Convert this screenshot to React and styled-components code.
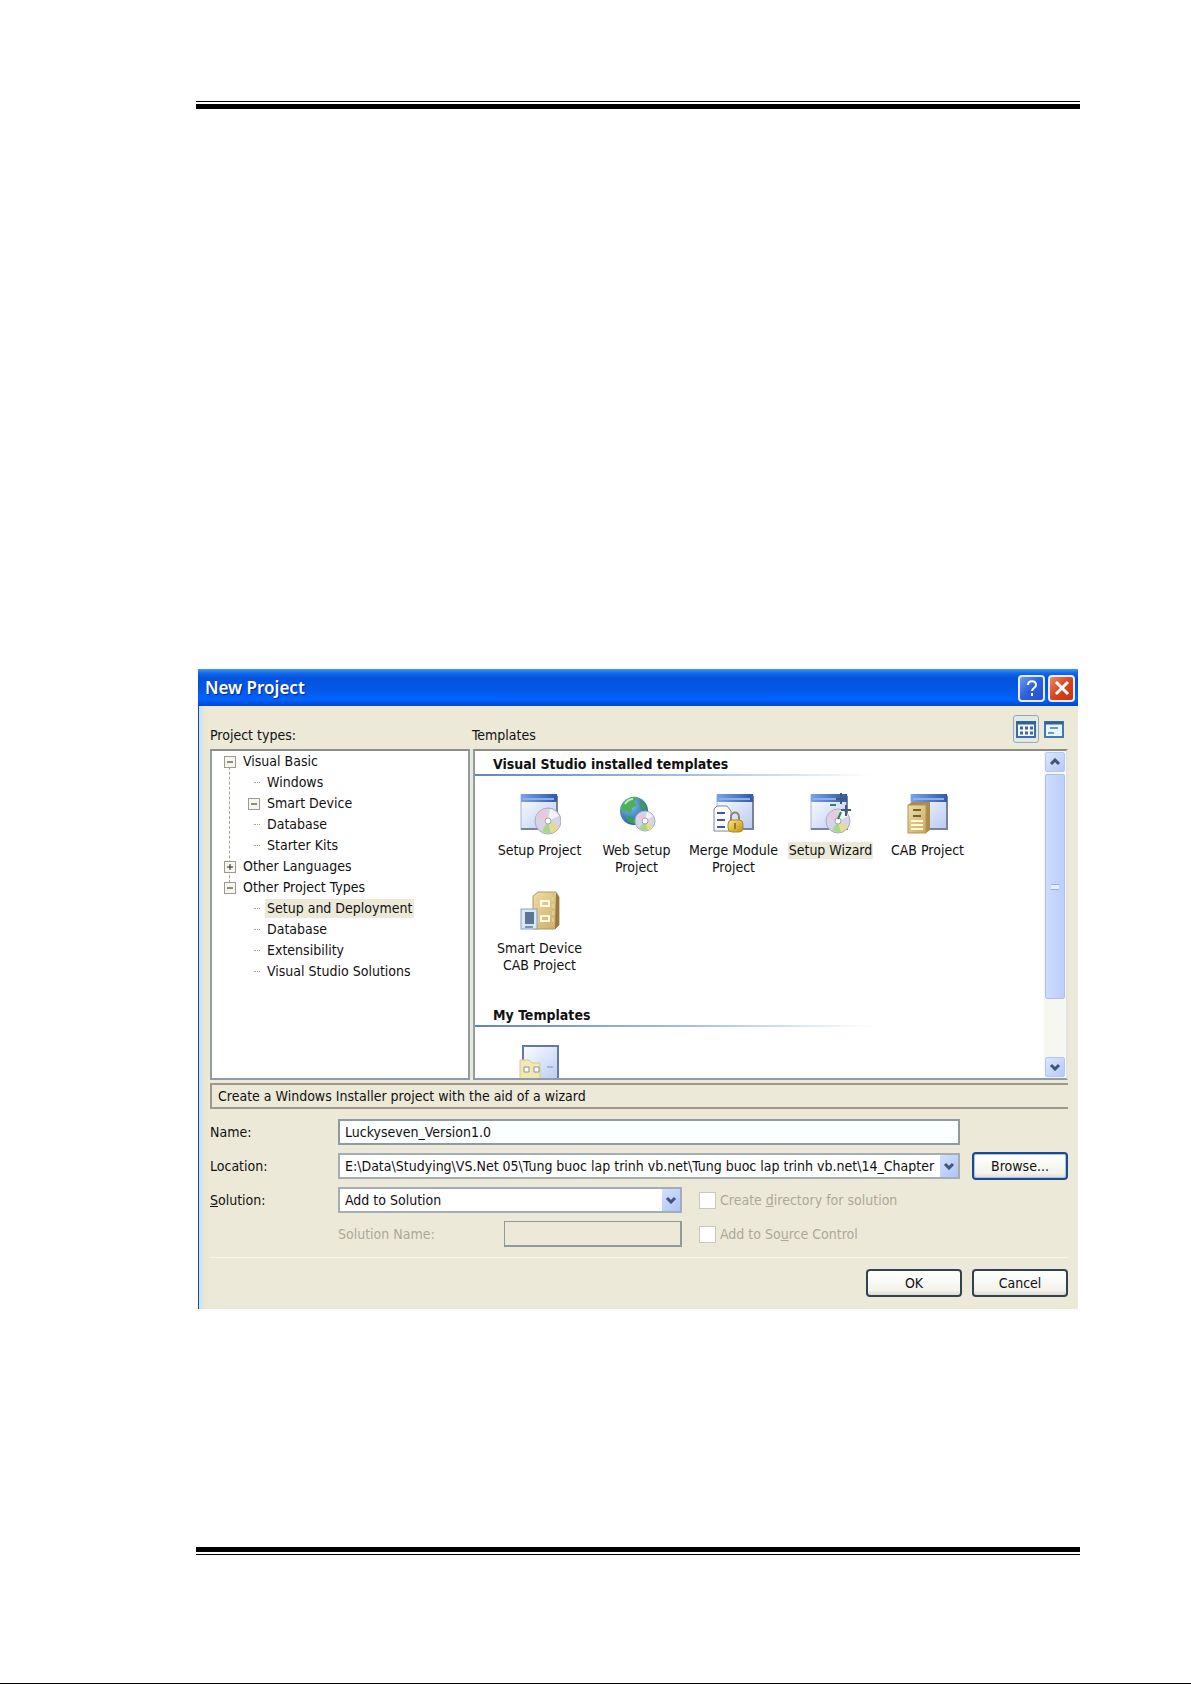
import React from 'react';
import styled, { createGlobalStyle } from 'styled-components';

const tree = [
    {
        label: 'Visual Basic',
        state: 'open',
        children: [
            { label: 'Windows' },
            { label: 'Smart Device', state: 'open' },
            { label: 'Database' },
            { label: 'Starter Kits' },
        ],
    },
    { label: 'Other Languages', state: 'closed' },
    {
        label: 'Other Project Types',
        state: 'open',
        children: [
            { label: 'Setup and Deployment', selected: true },
            { label: 'Database' },
            { label: 'Extensibility' },
            { label: 'Visual Studio Solutions' },
        ],
    },
];

const WindowShape = ({ x = 2 }) => (
    <g>
        <rect x={x} y="2" width="36" height="34" fill="url(#pane)" stroke="#a3b3da" />
        <path d={`M${x + 36} 3v33H${x}`} fill="none" stroke="#76839f" strokeWidth="2" />
        <rect x={x} y="1" width="36" height="8" fill="url(#bar)" />
        <path d={`M${x + 2} 6h31`} stroke="#8db0ea" strokeWidth="2" />
    </g>
);

const Disc = ({ cx, cy, r }) => (
    <g>
        <circle cx={cx} cy={cy} r={r} fill="#d5d5e4" stroke="#a9abc2" />
        <path d={`M${cx} ${cy}L${cx - r + 1} ${cy - 4}A${r} ${r} 0 0 1 ${cx - 2} ${cy - r + 1}z`} fill="#e9c7df" />
        <path d={`M${cx} ${cy}L${cx + 2} ${cy - r + 1}A${r} ${r} 0 0 1 ${cx + r - 2} ${cy - 5}z`} fill="#f3f3f8" />
        <path d={`M${cx} ${cy}L${cx - 6} ${cy + r - 3}A${r} ${r} 0 0 0 ${cx + 3} ${cy + r - 1}z`} fill="#a8d68c" />
        <path d={`M${cx} ${cy}L${cx + 3} ${cy + r - 1}A${r} ${r} 0 0 0 ${cx + r - 2} ${cy + 6}z`} fill="#e6dc8c" />
        <circle cx={cx} cy={cy} r="3" fill="#fff" stroke="#a6a6b8" />
    </g>
);

const Cabinet = ({ x, y, w, h }) => (
    <g>
        <path d={`M${x} ${y + 3}l4 -3h${w - 4}v${h - 3}l-4 3h-${w - 4}z`} fill="#a98c4d" />
        <rect x={x} y={y + 3} width={w - 4} height={h - 3} fill="url(#cab)" stroke="#b39655" />
        <path d={`M${x + 5} ${y + 8}h${w - 14}M${x + 5} ${y + 14}h${w - 14}`} stroke="#6d6047" strokeWidth="2" />
        <path d={`M${x + 3} ${y + 19}h${w - 10}M${x + 3} ${y + 23}h${w - 10}M${x + 3} ${y + 27}h${w - 10}`} stroke="#fff8d8" strokeWidth="2" />
    </g>
);

const icons = {
    setup: (
        <>
            <WindowShape />
            <Disc cx={29} cy={28} r={13} />
        </>
    ),
    web: (
        <>
            <circle cx="18" cy="18" r="14" fill="url(#globe)" />
            <path d="M8 9c4-5 9-6 14-5l-4 5 3 3-5 3-1 5-5-2-4 2c-1-4 0-8 2-11z" fill="#4fae5c" />
            <path d="M25 7c4 3 6 7 6 11l-5-2-3-5zM13 23l6 2 1 6c-4 0-8-2-10-5z" fill="#3d9b55" />
            <path d="M9 11c2-3 5-5 8-5" stroke="#b9ebc4" strokeWidth="2" fill="none" />
            <Disc cx={29} cy={28} r={10} />
        </>
    ),
    merge: (
        <>
            <WindowShape x={4} />
            <path d="M1 16l3-3h10l4 5v20H1z" fill="#fff" stroke="#7f8694" />
            <path d="M4 20h8M4 27h8M4 34h8" stroke="#3c58a6" strokeWidth="2" />
            <path d="M18 28v-4c0-6 8-6 8 0v4" fill="none" stroke="#8b867a" strokeWidth="2" />
            <rect x="15" y="27" width="15" height="12" rx="4" fill="url(#gold)" stroke="#b38a1c" />
            <path d="M22 30v6" stroke="#a07a18" strokeWidth="2" />
        </>
    ),
    wizard: (
        <>
            <WindowShape x={1} />
            <Disc cx={28} cy={28} r={12} />
            <path d="M31 0v11M26 6h10M36 12v11M31 17h10" stroke="#42597a" strokeWidth="2" />
            <path d="M20 12h6M31 19l-3 7" stroke="#37815c" strokeWidth="2" />
        </>
    ),
    cab: (
        <>
            <WindowShape x={4} />
            <Cabinet x={1} y={9} w={22} h={31} />
        </>
    ),
    device: (
        <>
            <path d="M14 5l5-4h18l3 5v28l-4 4H14z" fill="url(#cab)" stroke="#b29761" />
            <path d="M37 2l3 4v28l-4 4z" fill="#98783f" />
            <path d="M22 10h8v5h-8zM22 25h8v5h-8z" fill="none" stroke="#fff8e4" strokeWidth="2" />
            <path d="M19 7v26M34 6v26" stroke="#ddcda1" strokeWidth="2" strokeDasharray="4 3" />
            <rect x="2" y="18" width="16" height="20" fill="#dce7f5" stroke="#8ba1bd" />
            <rect x="6" y="21" width="9" height="12" fill="#587797" />
            <path d="M6 36h8" stroke="#7894be" strokeWidth="2" />
        </>
    ),
    mine: (
        <>
            <rect x="4" y="2" width="35" height="36" fill="url(#pane)" stroke="#6478a8" strokeWidth="2" />
            <path d="M1 16h9l3 3h8v21H1z" fill="#f2e8b4" stroke="#d5ca94" />
            <path d="M5 23h5v5H5zM15 23h5v5h-5zM28 23h6" fill="#fff" stroke="#8a8f9c" />
        </>
    ),
};

const installed = [
    { label: 'Setup Project', icon: 'setup' },
    { label: 'Web Setup Project', icon: 'web' },
    { label: 'Merge Module Project', icon: 'merge' },
    { label: 'Setup Wizard', icon: 'wizard', selected: true },
    { label: 'CAB Project', icon: 'cab' },
    { label: 'Smart Device CAB Project', icon: 'device' },
];

const Chevron = ({ up }) => (
    <svg width="12" height="8" viewBox="0 0 12 8" aria-hidden="true">
        <path d={up ? 'M2 6l4-4 4 4' : 'M2 2l4 4 4-4'} fill="none" stroke="#3f547f" strokeWidth="3" />
    </svg>
);

const IconDefs = () => (
    <Defs aria-hidden="true">
        <defs>
            <linearGradient id="pane" x1="0" y1="0" x2="1" y2="1">
                <stop offset="0" stopColor="#fdfdff" />
                <stop offset="1" stopColor="#b9cbf2" />
            </linearGradient>
            <linearGradient id="bar" x1="0" y1="0" x2="1" y2="0">
                <stop offset="0" stopColor="#7aa2e6" />
                <stop offset="1" stopColor="#3359a8" />
            </linearGradient>
            <linearGradient id="cab" x1="0" y1="0" x2="1" y2="1">
                <stop offset="0" stopColor="#f0dda2" />
                <stop offset="1" stopColor="#c9aa65" />
            </linearGradient>
            <linearGradient id="gold" x1="0" y1="0" x2="1" y2="1">
                <stop offset="0" stopColor="#ffe582" />
                <stop offset="1" stopColor="#bf8f16" />
            </linearGradient>
            <radialGradient id="globe" cx="0.35" cy="0.3" r="0.8">
                <stop offset="0" stopColor="#7cc6ee" />
                <stop offset="1" stopColor="#1c4f9e" />
            </radialGradient>
        </defs>
    </Defs>
);

const TreeItem = ({ item, nested }) => (
    <li>
        <TreeRow $nested={nested}>
            {item.state
                ? <Expander aria-label={`Toggle ${item.label}`}>
                    <svg width="10" height="10" viewBox="0 0 10 10">
                        <path d={item.state === 'open' ? 'M2 5h6' : 'M2 5h6M5 2v6'} stroke="#222" />
                    </svg>
                </Expander>
                : <Dash />
            }
            <TreeLabel $selected={item.selected}>{item.label}</TreeLabel>
        </TreeRow>
        {item.children
            && <TreeList>
                {item.children.map(v => <TreeItem key={v.label} item={v} nested />)}
            </TreeList>
        }
    </li>
);

const Template = ({ label, icon, selected }) => (
    <Tile>
        <svg width="42" height="42" viewBox="0 0 42 42" aria-hidden="true">{icons[icon]}</svg>
        {label && <TileLabel $selected={selected}>{label}</TileLabel>}
    </Tile>
);

const App = () => {
    return (
        <Page>
            <GlobalStyle />
            <IconDefs />
            <Rule />
            <Dialog>
                <TitleBar>
                    <Title>New Project</Title>
                    <CaptionButton aria-label="Help">
                        <svg width="16" height="18" viewBox="0 0 16 18">
                            <path d="M4 6c0-5 8-5 8 0 0 3-4 3-4 6M8 14v3" fill="none" stroke="#fff" strokeWidth="2" />
                        </svg>
                    </CaptionButton>
                    <CaptionButton $close aria-label="Close">
                        <svg width="16" height="16" viewBox="0 0 16 16">
                            <path d="M2 2l12 12M14 2L2 14" stroke="#fff" strokeWidth="3" />
                        </svg>
                    </CaptionButton>
                </TitleBar>

                <Body>
                    <Headings>
                        <TypesCaption>Project types:</TypesCaption>
                        <Caption>Templates</Caption>
                        <ViewButtons>
                            <ViewButton $active aria-label="Large icons">
                                <svg width="20" height="17" viewBox="0 0 20 17">
                                    <rect x="1" y="1" width="18" height="15" fill="#eef7ff" stroke="#3a6ca0" strokeWidth="2" />
                                    <path d="M1 2h18" stroke="#2e619b" strokeWidth="3" />
                                    <path d="M4 7h3M9 7h3M14 7h3M4 12h3M9 12h3M14 12h3" stroke="#47698e" strokeWidth="3" />
                                </svg>
                            </ViewButton>
                            <ViewButton aria-label="Small icons">
                                <svg width="20" height="17" viewBox="0 0 20 17">
                                    <rect x="1" y="1" width="18" height="15" fill="#e6f5ff" stroke="#4179ac" strokeWidth="2" />
                                    <path d="M1 2h18" stroke="#2e619b" strokeWidth="3" />
                                    <path d="M6 7h8M4 12h6" stroke="#7497b5" strokeWidth="2" />
                                </svg>
                            </ViewButton>
                        </ViewButtons>
                    </Headings>

                    <Panels>
                        <TypesPanel>
                            <TreeList>
                                {tree.map(v => <TreeItem key={v.label} item={v} />)}
                            </TreeList>
                        </TypesPanel>
                        <TemplatesPanel>
                            <TemplatesContent>
                                <GroupTitle>Visual Studio installed templates</GroupTitle>
                                <Tiles>
                                    {installed.map(v => <Template key={v.label} {...v} />)}
                                </Tiles>
                                <GroupTitle>My Templates</GroupTitle>
                                <Tiles>
                                    <Template icon="mine" />
                                </Tiles>
                            </TemplatesContent>
                            <ScrollBar>
                                <ScrollButton aria-label="Scroll up"><Chevron up /></ScrollButton>
                                <Thumb><Grip /></Thumb>
                                <ScrollSpace />
                                <ScrollButton aria-label="Scroll down"><Chevron /></ScrollButton>
                            </ScrollBar>
                        </TemplatesPanel>
                    </Panels>

                    <Description>Create a Windows Installer project with the aid of a wizard</Description>

                    <Form>
                        <label htmlFor="name">Name:</label>
                        <TextBox id="name" defaultValue="Luckyseven_Version1.0" />
                        <span />

                        <label htmlFor="location">Location:</label>
                        <SelectBox>
                            <Select id="location">
                                <option>E:\Data\Studying\VS.Net 05\Tung buoc lap trinh vb.net\Tung buoc lap trinh vb.net\14_Chapter</option>
                            </Select>
                            <Arrow><Chevron /></Arrow>
                        </SelectBox>
                        <Button $focused>Browse...</Button>

                        <label htmlFor="solution"><u>S</u>olution:</label>
                        <Split>
                            <SolutionCell>
                                <SelectBox>
                                    <Select id="solution">
                                        <option>Add to Solution</option>
                                    </Select>
                                    <Arrow><Chevron /></Arrow>
                                </SelectBox>
                            </SolutionCell>
                            <Check>
                                <CheckBox type="checkbox" disabled />
                                <span>Create <u>d</u>irectory for solution</span>
                            </Check>
                        </Split>
                        <span />

                        <span />
                        <Split>
                            <SolutionCell>
                                <DisabledLabel htmlFor="solutionName">Solution Name:</DisabledLabel>
                                <TextBox id="solutionName" disabled />
                            </SolutionCell>
                            <Check>
                                <CheckBox type="checkbox" disabled />
                                <span>Add to So<u>u</u>rce Control</span>
                            </Check>
                        </Split>
                        <span />
                    </Form>

                    <Footer>
                        <Button>OK</Button>
                        <Button>Cancel</Button>
                    </Footer>
                </Body>
            </Dialog>
            <Rule $bottom />
        </Page>
    );
};

const GlobalStyle = createGlobalStyle`
    * {
        box-sizing: border-box;
    }
    body {
        margin: 0;
        background: #fff;
    }
    body, button, input, select {
        font-family: "DejaVu Sans Condensed", "DejaVu Sans", sans-serif;
        font-size: 14px;
        line-height: 17px;
        color: #111;
    }
    ul {
        list-style: none;
        margin: 0;
        padding: 0;
    }
`;

const Defs = styled.svg`
    position: absolute;
    width: 0;
    height: 0;
`;

const Page = styled.main`
    display: flex;
    flex-direction: column;
    min-height: 100vh;
    padding: 101px 111px 128px 196px;
    border-bottom: 1px solid #000;
`;

const Rule = styled.div`
    height: 8px;
    flex: none;
    border-style: solid;
    border-color: #000;
    border-width: ${props => props.$bottom ? '5px 0 1px' : '1px 0 5px'};
    margin-top: ${props => props.$bottom ? 'auto' : '0'};
`;

const Dialog = styled.section`
    margin: 560px 2px 80px;
    background: linear-gradient(to right, #cde8f5 3px, #e8e9cc 5px, #ece9d8 10px);
    border-left: 1px solid #1c40c8;
`;

const TitleBar = styled.header`
    display: flex;
    align-items: center;
    gap: 3px;
    height: 37px;
    padding: 1px 3px 0 7px;
    margin-left: -1px;
    background: linear-gradient(#3b9bff 0, #1468ea 4px, #0553dc 9px, #0457e6 20px, #0064ff 30px, #0247cc 37px);
`;

const Title = styled.h1`
    flex: 1;
    margin: 0;
    font-family: "Noto Sans", sans-serif;
    font-size: 17px;
    line-height: 24px;
    font-weight: 600;
    color: #fff;
    text-shadow: 1px 1px 1px #0a2a80;
`;

const CaptionButton = styled.button`
    display: flex;
    align-items: center;
    justify-content: center;
    width: 27px;
    height: 27px;
    padding: 0;
    border: 2px solid #e4edfd;
    border-radius: 4px;
    background: ${props => props.$close
        ? 'linear-gradient(135deg, #ea8a68, #d8441a 50%, #c03a12)'
        : 'linear-gradient(135deg, #6e9bf0, #2c5fd8 50%, #2454cc)'};
`;

const Body = styled.div`
    padding: 9px 10px 12px 11px;
`;

const Headings = styled.div`
    display: flex;
    align-items: center;
    height: 34px;
`;

const Caption = styled.span`
    padding-top: 6px;
`;

const TypesCaption = styled(Caption)`
    width: 262px;
`;

const ViewButtons = styled.div`
    display: flex;
    gap: 2px;
    margin: 0 1px 6px auto;
`;

const ViewButton = styled.button`
    display: flex;
    align-items: center;
    justify-content: center;
    width: 26px;
    height: 28px;
    padding: 0;
    border: 1px solid ${props => props.$active ? '#98a9b5' : 'transparent'};
    border-radius: 3px;
    background: ${props => props.$active ? '#e3e9e6' : 'transparent'};
`;

const Panels = styled.div`
    display: flex;
    gap: 3px;
    height: 331px;
`;

const Panel = styled.div`
    border: 2px solid #8e9da5;
    border-top-color: #8a8d84;
    background: #fff;
`;

const TypesPanel = styled(Panel)`
    width: 260px;
    padding-left: 12px;
`;

const TemplatesPanel = styled(Panel)`
    display: flex;
    flex: 1;
    min-width: 0;
    border-right-color: #e4e4dc;
`;

const TreeList = styled.ul`
    position: relative;

    /* dotted guide that joins the top level expanders */
    ${TypesPanel} > &::before {
        content: "";
        position: absolute;
        left: 5px;
        top: 11px;
        height: 126px;
        border-left: 1px dashed #a8a08c;
    }
`;

const TreeRow = styled.div`
    position: relative;
    display: flex;
    align-items: center;
    gap: 5px;
    height: 21px;
    padding-left: ${props => props.$nested ? '24px' : '0'};
    white-space: nowrap;
`;

const Expander = styled.button`
    display: flex;
    width: 12px;
    height: 12px;
    padding: 0;
    border: 1px solid #9a9a90;
    background: #f6f5ee;
`;

const Dash = styled.span`
    width: 6px;
    margin: 0 0 0 6px;
    border-top: 1px dotted #a8a08c;
`;

const TreeLabel = styled.span`
    padding: 1px 2px;
    background: ${props => props.$selected ? '#ece9d8' : 'transparent'};
`;

const TemplatesContent = styled.div`
    flex: 1;
    min-width: 0;
    overflow: hidden;
`;

const GroupTitle = styled.h2`
    height: 25px;
    margin: 0;
    padding: 4px 0 0 18px;
    font-size: 14px;
    line-height: 18px;
    font-weight: 700;
    border-bottom: 2px solid;
    border-image: linear-gradient(to right, #5e86b8, #a9c4e2 40%, #fff 70%) 1;
`;

const Tiles = styled.div`
    display: grid;
    grid-template-columns: repeat(auto-fill, 97px);
    grid-auto-rows: 98px;
    padding: 17px 0 13px 16px;
`;

const Tile = styled.div`
    display: flex;
    flex-direction: column;
    align-items: center;
    gap: 7px;

    svg {
        flex: none;
    }
`;

const TileLabel = styled.span`
    padding: 0 1px;
    text-align: center;
    background: ${props => props.$selected ? '#ece9d8' : 'transparent'};
`;

const ScrollBar = styled.div`
    display: flex;
    flex-direction: column;
    gap: 2px;
    width: 22px;
    padding: 1px;
    background: #f7f7f2;
`;

const ScrollButton = styled.button`
    display: flex;
    align-items: center;
    justify-content: center;
    height: 20px;
    padding: 0;
    border: 1px solid #b4c8f6;
    border-radius: 2px;
    background: linear-gradient(135deg, #dbe6fe, #b5c9f8);
`;

const Thumb = styled.div`
    display: flex;
    align-items: center;
    justify-content: center;
    flex: 224;
    border: 1px solid #aebfea;
    border-radius: 2px;
    background: linear-gradient(to right, #cddcff, #bccffa);
`;

const Grip = styled.span`
    width: 8px;
    height: 6px;
    border: solid #95aee6;
    border-width: 1px 0;
    background: #e6eeff;
`;

const ScrollSpace = styled.div`
    flex: 54;
`;

const Description = styled.p`
    height: 26px;
    margin: 3px 0 10px;
    padding: 1px 6px;
    border: 2px solid #9c988f;
    border-right-width: 0;
    line-height: 20px;
`;

const Form = styled.div`
    display: grid;
    grid-template-columns: 116px 1fr 96px;
    grid-template-rows: 26px 26px 26px 26px;
    gap: 8px 12px;
    align-items: center;
`;

const TextBox = styled.input`
    width: 100%;
    min-width: 0;
    height: 26px;
    padding: 0 5px;
    border: 2px solid #8f9a9e;
    border-radius: 0;
    background: #fcffff;

    &:disabled {
        border-width: 1px 2px 2px 1px;
        background: #ece9d8;
    }
`;

const SelectBox = styled.div`
    position: relative;
    width: 100%;
`;

const Select = styled.select`
    display: block;
    width: 100%;
    height: 26px;
    padding: 0 20px 0 5px;
    border: 2px solid #a4adb2;
    border-radius: 0;
    background: #fff;
    appearance: none;
`;

const Arrow = styled.span`
    position: absolute;
    top: 2px;
    right: 2px;
    display: flex;
    align-items: center;
    justify-content: center;
    width: 18px;
    height: 22px;
    background: linear-gradient(135deg, #d3e0fd, #aec5f6);
    pointer-events: none;
`;

const Split = styled.div`
    display: flex;
    align-items: center;
    gap: 17px;
`;

const SolutionCell = styled.div`
    display: flex;
    align-items: center;
    width: 344px;
`;

const DisabledLabel = styled.label`
    flex: none;
    width: 166px;
    color: #aca899;
`;

const Check = styled.label`
    display: flex;
    align-items: center;
    gap: 4px;
    color: #aca899;
    white-space: nowrap;
`;

const CheckBox = styled.input`
    appearance: none;
    width: 17px;
    height: 17px;
    margin: 0;
    border: 1px solid #cac8bb;
    background: #fff;
`;

const Button = styled.button`
    width: 96px;
    height: 28px;
    padding: 0;
    border: 2px solid ${props => props.$focused ? '#1d4a8f' : '#34414e'};
    border-radius: 4px;
    background: linear-gradient(#fff, #f3f3ec 80%, #dcdccf);
    box-shadow: ${props => props.$focused ? 'inset 0 0 0 1px #a9c3f0' : 'none'};
`;

const Footer = styled.footer`
    display: flex;
    justify-content: flex-end;
    gap: 10px;
    margin-top: 10px;
    padding-top: 11px;
    border-top: 1px solid #f8f6ec;
`;

export default App;
